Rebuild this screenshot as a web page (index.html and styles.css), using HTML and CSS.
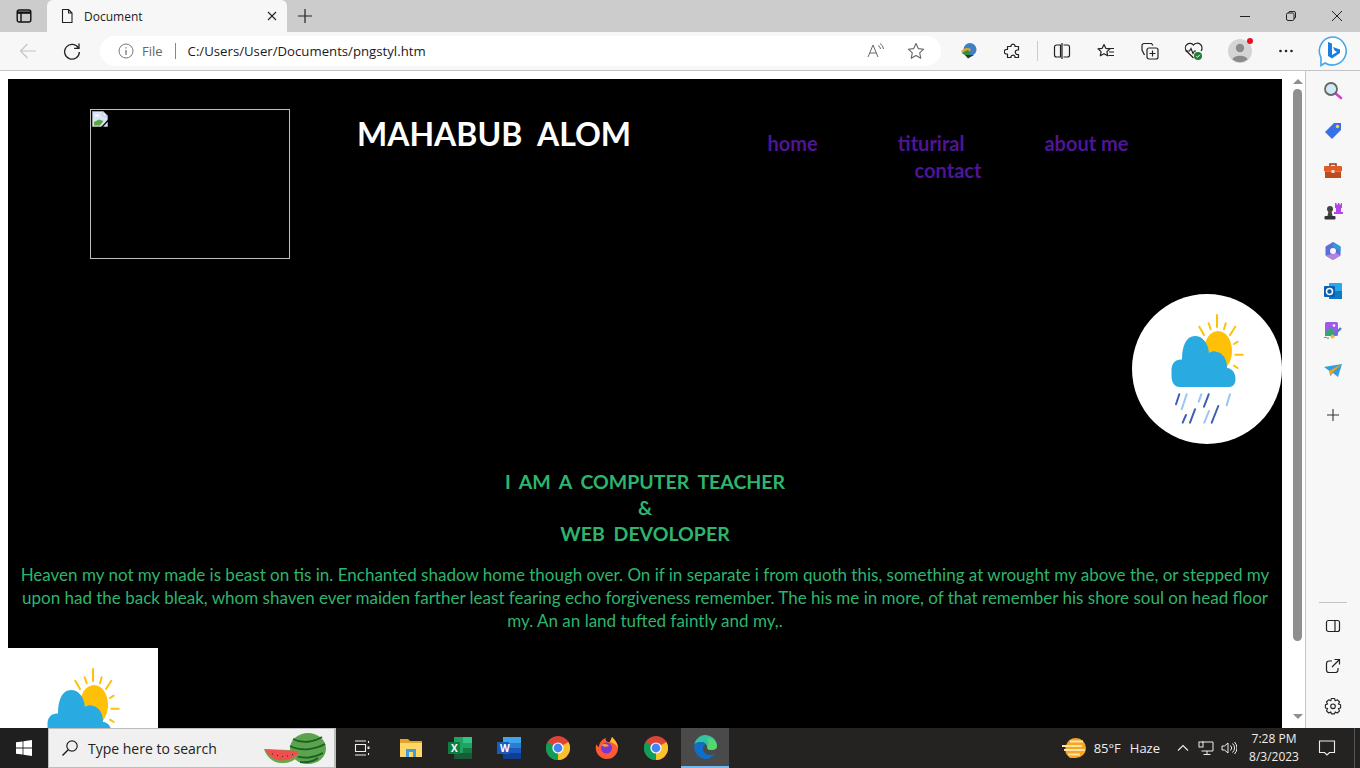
FILE: index.html
```html
<!DOCTYPE html>
<html lang="en">
<head>
<meta charset="utf-8">
<title>Document</title>
<link rel="stylesheet" href="styles.css">
</head>
<body>
<svg class="defs" width="0" height="0" aria-hidden="true">
  <symbol id="weather" viewBox="0 0 150 150">
    <g stroke="#ffc107" stroke-width="2" stroke-linecap="round" fill="none">
      <path d="M85 21V33M67.3 32.7 72 41M76.7 29.3 78.7 35.3M93.7 29.3 92 35.3M103.3 32.7 98 41M105.7 47.7 102 50M103.3 60.7H110.7M102 71.7 105.7 74"/>
    </g>
    <ellipse cx="86" cy="57" rx="14" ry="20" fill="#ffc107"/>
    <path fill="#29abe2" d="M48 93C42 93 39.5 88 39.5 82V76C39.5 69 44 65 50 65.5 50 52 54 42 63 42 70 42 76 48 77 59 80 57 83 57 85 58 91 59 95 65 95 74 100 74 103.5 79 103.5 85 103.5 90 101 93 97 93Z"/>
    <g stroke="#3f5fb5" stroke-width="2" stroke-linecap="round" fill="none">
      <path d="M47.3 100.3 44 110.3M76.7 100.3 72 112.7M54 121 50.7 128.7M63 115.3 58 128.7M86.3 112 79.7 128.7"/>
    </g>
    <g stroke="#9cc4f0" stroke-width="2" stroke-linecap="round" fill="none">
      <path d="M54.7 100.3 49.7 115.3M69.3 100.3 66.7 107.7M98 100.3 94.7 111.3M77 117 72.3 128.7"/>
    </g>
  </symbol>
  <symbol id="chrome" viewBox="0 0 24 24">
    <circle cx="12" cy="12" r="12" fill="#db4437"/>
    <path d="M12 12 22.4 6A12 12 0 0 1 12 24Z" fill="#fbc02d"/>
    <path d="M12 12 12 24A12 12 0 0 1 1.6 6Z" fill="#0f9d58"/>
    <circle cx="12" cy="12" r="5.6" fill="#fff"/>
    <circle cx="12" cy="12" r="4.4" fill="#4285f4"/>
  </symbol>
</svg>

<div class="window">
  <header class="tabbar">
    <svg class="tabs-toggle" width="16" height="16" viewBox="0 0 16 16" fill="none" stroke="#111" stroke-width="1.4"><rect x="1.2" y="2" width="13.6" height="12" rx="2"/><path d="M1.2 4.6H14.800" stroke-width="2.400"/><path d="M5 5V14"/></svg>
    <div class="tab">
      <svg width="16" height="16" viewBox="0 0 16 16" fill="none" stroke="#222" stroke-width="1.1"><path d="M3.5 1.5H9.5L13 5V14.5H3.5ZM9.5 1.5V5H13" stroke-linejoin="round"/></svg>
      <span class="tab-title">Document</span>
      <svg class="tab-close" width="10" height="10" viewBox="0 0 10 10" stroke="#222" stroke-width="1.1"><path d="M1 1 9 9M9 1 1 9"/></svg>
    </div>
    <svg class="new-tab" width="16" height="16" viewBox="0 0 16 16" stroke="#222" stroke-width="1.2"><path d="M8 1V15M1 8H15"/></svg>
    <div class="win-controls">
      <svg width="12" height="12" viewBox="0 0 12 12" stroke="#222" stroke-width="1"><path d="M1 6.5H11"/></svg>
      <svg width="12" height="12" viewBox="0 0 12 12" fill="none" stroke="#222" stroke-width="1"><rect x="1.5" y="3" width="7.5" height="7.5" rx="1.5"/><path d="M3.5 3V2.8A1.5 1.5 0 0 1 5 1.5H9A1.5 1.5 0 0 1 10.5 3V7A1.5 1.5 0 0 1 9 8.5"/></svg>
      <svg width="12" height="12" viewBox="0 0 12 12" stroke="#222" stroke-width="1"><path d="M1 1 11 11M11 1 1 11"/></svg>
    </div>
  </header>

  <nav class="toolbar">
    <svg class="nav-back" width="18" height="18" viewBox="0 0 18 18" fill="none" stroke="#c4c4c4" stroke-width="1.2"><path d="M17 9H1.5M8.5 2 1.5 9 8.5 16"/></svg>
    <svg class="nav-reload" width="18" height="18" viewBox="0 0 18 18" fill="none" stroke="#222" stroke-width="1.3"><path d="M15.5 6.2A7.4 7.4 0 1 0 16.4 10M16 1.5V6.4H11.1"/></svg>
    <div class="address">
      <svg width="16" height="16" viewBox="0 0 16 16" fill="none" stroke="#777" stroke-width="1"><circle cx="8" cy="8" r="7"/><path d="M8 7V12M8 4.2V5.6" stroke-width="1.3"/></svg>
      <span class="addr-file">File</span>
      <span class="addr-sep"></span>
      <span class="addr-url">C:/Users/User/Documents/pngstyl.htm</span>
      <span class="addr-end">
        <svg width="18" height="18" viewBox="0 0 18 18" fill="none" stroke="#666" stroke-width="1"><path d="M1 15 6 3 11 15M3 11H9M11 3.5A4 4 0 0 1 13.5 7M13 1.5A7 7 0 0 1 16.5 7"/></svg>
        <svg width="18" height="18" viewBox="0 0 18 18" fill="none" stroke="#666" stroke-width="1.1" stroke-linejoin="round"><path d="M9 1.6 11.3 6.6 16.7 7.2 12.7 10.9 13.8 16.3 9 13.6 4.2 16.3 5.3 10.9 1.3 7.2 6.7 6.6Z"/></svg>
      </span>
    </div>
    <div class="tb-btn tb-first">
      <svg width="18" height="18" viewBox="0 0 18 18"><circle cx="10" cy="7.5" r="6.5" fill="#3f7fc4"/><path d="M1 10C3 6 7 5 11 7L9 11Z" fill="#e2a32c"/><path d="M1.5 11 8 8 10.5 11 8 15Z" fill="#2f8f3a"/><path d="M5 13H14L8 16.5Z" fill="#333"/></svg>
    </div>
    <div class="tb-btn">
      <svg width="18" height="18" viewBox="0 0 18 18" fill="none" stroke="#222" stroke-width="1.2" stroke-linejoin="round"><path d="M7 3.5A2.2 2.2 0 0 1 11 3.5V4.5H14.5V8H13.5A2.2 2.2 0 0 0 13.5 12.5H14.5V15.5H11V14.5A2.2 2.2 0 0 0 7 14.5V15.5H3.5V12H2.5A2.2 2.2 0 0 1 2.5 7.5H3.5V4.5H7Z"/></svg>
    </div>
    <span class="tb-sep"></span>
    <div class="tb-btn">
      <svg width="18" height="18" viewBox="0 0 18 18" fill="none" stroke="#222" stroke-width="1.2"><path d="M7.5 3H3.5A2 2 0 0 0 1.5 5V13A2 2 0 0 0 3.5 15H7.5ZM10.5 3H14.5A2 2 0 0 1 16.5 5V13A2 2 0 0 1 14.5 15H10.5M9 1V17"/></svg>
    </div>
    <div class="tb-btn">
      <svg width="18" height="18" viewBox="0 0 18 18" fill="none" stroke="#222" stroke-width="1.2" stroke-linejoin="round"><path d="M7 2.5 8.8 6.3 13 6.8 9.9 9.6 10.7 13.8 7 11.7 3.3 13.8 4.1 9.6 1 6.8 5.2 6.3ZM12 6.5H17M12 10H17M11.5 13.5H17"/></svg>
    </div>
    <div class="tb-btn">
      <svg width="18" height="18" viewBox="0 0 18 18" fill="none" stroke="#222" stroke-width="1.2"><rect x="6" y="6" width="11" height="11" rx="2"/><path d="M11.5 8.5V14.5M8.5 11.5H14.5M12 3.5 10.5 1.5H3A2 2 0 0 0 1 3.5V8L3.5 13"/></svg>
    </div>
    <div class="tb-btn">
      <svg width="20" height="20" viewBox="0 0 20 20" fill="none"><path d="M9.5 17 2.5 10A4.6 4.6 0 0 1 9.5 4 4.6 4.6 0 0 1 17 10" stroke="#222" stroke-width="1.2"/><path d="M1.5 10H5.5L7 7.5 9 12.5 10.5 10H12" stroke="#222" stroke-width="1.2"/><circle cx="14" cy="15" r="4" fill="#1e7e34"/><path d="M12.2 15 13.5 16.3 15.8 13.8" stroke="#fff"/></svg>
    </div>
    <div class="tb-btn tb-gap">
      <span class="avatar">
        <svg width="24" height="24" viewBox="0 0 24 24"><circle cx="12" cy="12" r="12" fill="#d4d4d4"/><circle cx="12" cy="9" r="4.2" fill="#8a8a8a"/><path d="M4.5 20.5C6 15.5 18 15.5 19.5 20.5A12 12 0 0 1 4.5 20.5Z" fill="#8a8a8a"/></svg>
        <span class="avatar-dot"></span>
      </span>
    </div>
    <div class="tb-btn tb-gap">
      <svg width="16" height="16" viewBox="0 0 16 16" fill="#222"><circle cx="2.5" cy="8" r="1.3"/><circle cx="8" cy="8" r="1.3"/><circle cx="13.5" cy="8" r="1.3"/></svg>
    </div>
    <div class="tb-btn tb-gap">
      <svg width="32" height="32" viewBox="0 0 32 32"><path d="M16 2A14 14 0 1 1 9 28L5 30.5V22.5A14 14 0 0 1 16 2Z" fill="#fff" stroke="#45a6e8" stroke-width="1.6"/><path d="M12 7 16 8.5V20L21 17 18.5 15.5 17 12 24 14.5V18L16 23.5 12 21Z" fill="#1b7fe0"/></svg>
    </div>
  </nav>

  <div class="content">
    <div class="viewport">
      <main class="page">
        <div class="page-head">
          <div class="broken-img">
            <svg width="16" height="16" viewBox="0 0 16 16"><path d="M0.500 0.500H11L15.500 5V15.500H0.500Z" fill="#d6e3fa" stroke="#a9a9a9" stroke-width=".8"/><path d="M11 0.500V5H15.500Z" fill="#fff" stroke="#a9a9a9" stroke-width=".6"/><path d="M2 14.500V11L7 8.500 11.500 10 8 14.500Z" fill="#58a83c"/><path d="M3 4.500H7" stroke="#fff" stroke-width="1.800"/><path d="M16.500 9 9.500 16.500" stroke="#000" stroke-width="1.400"/></svg>
          </div>
          <h1 class="title">MAHABUB ALOM</h1>
          <ul class="menu">
            <li>home</li>
            <li>tituriral</li>
            <li>about me</li>
            <li>contact</li>
          </ul>
        </div>
        <div class="badge"><svg width="150" height="150"><use href="#weather"/></svg></div>
        <h2 class="lead">I AM A COMPUTER TEACHER<br>&amp;<br>WEB DEVOLOPER</h2>
        <p class="copy">Heaven my not my made is beast on tis in. Enchanted shadow home though over. On if in separate i from quoth this, something at wrought my above the, or stepped my<br>upon had the back bleak, whom shaven ever maiden farther least fearing echo forgiveness remember. The his me in more, of that remember his shore soul on head floor<br>my. An an land tufted faintly and my,.</p>
        <div class="tile"><svg width="150" height="150"><use href="#weather"/></svg></div>
      </main>
    </div>
    <div class="scrollbar">
      <span class="arrow-up"></span>
      <span class="thumb"></span>
      <span class="arrow-down"></span>
    </div>
    <aside class="sidebar">
      <div class="side-group">
        <div class="side-btn"><svg width="20" height="20" viewBox="0 0 20 20"><path d="M12 12 18 17" stroke="#d23fd0" stroke-width="2.6" stroke-linecap="round"/><circle cx="8" cy="8" r="6" fill="#cfeaf7" stroke="#666" stroke-width="1.8"/></svg></div>
        <div class="side-btn"><svg width="20" height="20" viewBox="0 0 20 20"><path d="M11 2H18V9L9 18 2 11Z" fill="#3b6fe8"/><circle cx="14.5" cy="5.5" r="1.7" fill="#ffd24d"/></svg></div>
        <div class="side-btn"><svg width="20" height="20" viewBox="0 0 20 20"><path d="M7 5V3H13V5" fill="none" stroke="#8c3a1a" stroke-width="1.5"/><rect x="1" y="5" width="18" height="5.5" rx="1" fill="#e25a26"/><rect x="2" y="10.5" width="16" height="6.5" fill="#bf4a1a"/><rect x="8.5" y="9" width="3" height="3" fill="#ddd"/></svg></div>
        <div class="side-btn"><svg width="20" height="20" viewBox="0 0 20 20"><path d="M12 2H13.5V3.5H15V2H16.5V3.5H18V2H19V7H18V11H20V13H11V11H13V7H12Z" fill="#b743e8"/><circle cx="7" cy="8" r="3" fill="#444"/><path d="M5.5 10H8.5L9.5 15H4.5Z" fill="#444"/><rect x="1.5" y="15" width="11" height="3.5" rx="1" fill="#333"/></svg></div>
        <div class="side-btn"><svg width="20" height="20" viewBox="0 0 20 20"><path d="M10 1 17.5 5.5V14.5L10 19 2.5 14.5V5.5Z" fill="#5a6fd8"/><path d="M10 1 17.5 5.5V10L10 6Z" fill="#2f9bd8"/><path d="M2.5 14.5 10 19 17.5 14.5 13 12Z" fill="#b483e0"/><circle cx="10" cy="10" r="3" fill="#f7f7f7"/></svg></div>
        <div class="side-btn"><svg width="20" height="20" viewBox="0 0 20 20"><rect x="6" y="2" width="13" height="16" rx="1" fill="#28a8ea"/><rect x="6" y="10" width="13" height="8" fill="#0f78c6"/><rect x="1" y="5" width="11" height="11" rx="1" fill="#0a5fb0"/><circle cx="6.5" cy="10.5" r="3" fill="none" stroke="#fff" stroke-width="1.5"/></svg></div>
        <div class="side-btn"><svg width="20" height="20" viewBox="0 0 20 20"><rect x="2" y="1" width="13" height="14" rx="1.5" fill="#9c5ce8"/><path d="M2 12 8 7 14 15H2Z" fill="#2fa86e"/><circle cx="11" cy="4.5" r="1.3" fill="#fff"/><path d="M10 15 18 7" stroke="#4a7be0" stroke-width="2.4"/><circle cx="9.5" cy="15.5" r="2" fill="#f2b632"/><path d="M1 17C3 15 4 18 6 17" stroke="#2a8a5a" fill="none"/></svg></div>
        <div class="side-btn"><svg width="20" height="20" viewBox="0 0 20 20"><path d="M1 6 19 3 15 16 10 12 7 15 6.5 10Z" fill="#2f9fe0"/><path d="M6 10 19 3 9 12 8 15Z" fill="#f2a21e"/></svg></div>
        <div class="side-btn side-add"><svg width="14" height="14" viewBox="0 0 14 14" stroke="#333" stroke-width="1.1"><path d="M7 1V13M1 7H13"/></svg></div>
      </div>
      <div class="side-group">
        <span class="side-rule"></span>
        <div class="side-btn"><svg width="16" height="16" viewBox="0 0 16 16" fill="none" stroke="#222" stroke-width="1.2"><rect x="1.5" y="2.5" width="13" height="11" rx="2"/><path d="M10 2.5V13.5"/></svg></div>
        <div class="side-btn"><svg width="16" height="16" viewBox="0 0 16 16" fill="none" stroke="#222" stroke-width="1.2"><path d="M7 3H4A2.5 2.5 0 0 0 1.5 5.5V12A2.5 2.5 0 0 0 4 14.5H10.5A2.5 2.5 0 0 0 13 12V10M7 9 14.5 1.5M9.5 1.5H14.5V6.5"/></svg></div>
        <div class="side-btn"><svg width="18" height="18" viewBox="0 0 18 18" fill="none" stroke="#222" stroke-width="1.1" stroke-linejoin="round"><path d="M7.4 1.5H10.6L11.2 3.8 13.4 2.8 15.6 5 14.4 7.1 16.6 7.8V10.9L14.4 11.6 15.5 13.8 13.3 16 11.2 14.9 10.6 16.9H7.4L6.8 14.9 4.7 16 2.5 13.8 3.6 11.6 1.4 10.9V7.8L3.6 7.1 2.4 5 4.6 2.8 6.8 3.8Z"/><circle cx="9" cy="9.3" r="2.3"/></svg></div>
      </div>
    </aside>
  </div>

  <footer class="taskbar">
    <div class="start"><svg width="16" height="16" viewBox="0 0 16 16" fill="#fff"><path d="M0 2.3 6.6 1.4V7.5H0ZM7.4 1.3 16 0V7.5H7.4ZM0 8.4H6.6V14.6L0 13.7ZM7.4 8.4H16V16L7.4 14.7Z"/></svg></div>
    <div class="search">
      <svg width="18" height="18" viewBox="0 0 18 18" fill="none" stroke="#222" stroke-width="1.2"><circle cx="11" cy="7" r="5.2"/><path d="M7.2 10.8 1.5 16.5" stroke-width="1.5"/></svg>
      <span class="search-text">Type here to search</span>
      <svg class="melon" width="62" height="31" viewBox="0 0 62 31"><ellipse cx="44" cy="15.500" rx="18" ry="15.500" fill="#5da34c"/><path d="M29 6C38 11 50 9 58 4M26 13C38 19 52 16 61 11M28 21C38 27 50 25 59 20M36 29C44 30 50 28 54 25" stroke="#17602a" stroke-width="1.800" fill="none"/><path d="M0 16 36 17.500C35 26 26 31 16 30 8 29 2 23 0 16Z" fill="#6aa84a"/><path d="M1 16.500 35 18C33 24 25 28 16 27.500 9 27 4 22 1 16.500Z" fill="#ef4f4f"/><path d="M8 21H9M13 22.500H14M18 23.500H19M23 23H24M28 21.500H29" stroke="#5a1414" stroke-width="1.200"/></svg>
    </div>
    <div class="tasks">
      <div class="task"><svg width="16" height="16" viewBox="0 0 16 16" fill="none" stroke="#eee" stroke-width="1.1"><path d="M1 1H12M1 15H12M1.5 4.5H11.5V11.5H1.5ZM14.5 1V3M14.5 13V15"/><rect x="13.5" y="6.5" width="2" height="2.5" fill="#eee" stroke="none"/></svg></div>
      <div class="task"><svg width="22" height="20" viewBox="0 0 22 20"><path d="M0 1H8L10 3H22V19H0Z" fill="#e0a526"/><rect x="0" y="5" width="22" height="14" fill="#ffd768"/><path d="M6 11H16V19H13V14H9V19H6Z" fill="#3f9fdc"/></svg></div>
      <div class="task"><svg width="24" height="22" viewBox="0 0 24 22"><rect x="6" y="0" width="18" height="22" fill="#21a366"/><rect x="15" y="0" width="9" height="6" fill="#33c481"/><rect x="15" y="11" width="9" height="5" fill="#107c41"/><rect x="6" y="16" width="18" height="6" fill="#185c37"/><rect x="0" y="5" width="12" height="12" fill="#107c41"/></svg><span class="doc-letter">X</span></div>
      <div class="task"><svg width="24" height="22" viewBox="0 0 24 22"><rect x="6" y="0" width="18" height="22" fill="#2b7cd3"/><rect x="6" y="0" width="18" height="6" fill="#41a5ee"/><rect x="6" y="11" width="18" height="5" fill="#185abd"/><rect x="6" y="16" width="18" height="6" fill="#103f91"/><rect x="0" y="5" width="12" height="12" fill="#185abd"/></svg><span class="doc-letter">W</span></div>
      <div class="task"><svg width="24" height="24"><use href="#chrome"/></svg></div>
      <div class="task"><svg width="24" height="24" viewBox="0 0 24 24"><path d="M12 23A11 11 0 0 1 1.500 8C2 10 3 10.500 4 11 4 7 7 3 11 2 10 5 12 6 15 6L17 1C21 5 23 8 23 12A11 11 0 0 1 12 23Z" fill="#ff5a36"/><path d="M17 1C20 4 23 8 23 12 21 8 18 7 15 6Z" fill="#ffbd2e"/><circle cx="11.500" cy="12" r="5.500" fill="#7a35d6"/><path d="M6 9C9 7 13 8 14 10L10 11Z" fill="#ff9a2e"/></svg></div>
      <div class="task"><svg width="24" height="24"><use href="#chrome"/></svg></div>
      <div class="task task-active"><svg width="24" height="24" viewBox="0 0 24 24"><path d="M1 11C2 4 7 0 12 0 19 0 24 5 24 11 24 14 21 15 18 15 15 15 14 14 14 12 14 9 11 7 8 7 4 7 1 9 1 11Z" fill="#35c1a5"/><path d="M14 3C19 3 24 6 24 11 24 14 21 15 18 15 15 15 14 14 15 11 16 9 16 6 14 3Z" fill="#57d66a"/><path d="M1 11C1 18 6 24 13 24 17 24 20 22 22 19 18 21 13 20 11 17 9 14 10 10 13 9 8 5 2 8 1 11Z" fill="#0f6fc6"/><path d="M22 19C19 23 15 24 13 24 17 24 20 22 22 19Z" fill="#0a4f95"/></svg></div>
    </div>
    <div class="tray">
      <svg width="24" height="22" viewBox="0 0 24 22"><path d="M14 1A10 10 0 0 1 14 21H8A11 11 0 0 1 14 1Z" fill="#f5a623"/><path d="M8 4.500H21M0 9H20M2 13H23M6 17.500H18" stroke="#ffe3a0" stroke-width="1.800"/></svg>
      <span class="temp">85°F</span>
      <span class="haze">Haze</span>
      <svg class="tray-chevron" width="12" height="12" viewBox="0 0 12 12" fill="none" stroke="#eee" stroke-width="1.1"><path d="M1 8.500 6 3.500 11 8.500"/></svg>
      <svg class="tray-net" width="16" height="16" viewBox="0 0 16 16" fill="none" stroke="#eee" stroke-width="1"><path d="M4 2H15V11H3.500M9 11V14M5.500 14.500H12.500"/><rect x="1" y="2" width="4" height="5"/></svg>
      <svg class="tray-vol" width="16" height="16" viewBox="0 0 16 16" fill="none" stroke="#eee" stroke-width="1"><path d="M1 6H3.500L7 3V13L3.500 10H1ZM9.500 5.500A3.500 3.500 0 0 1 9.500 10.500M11.500 3.500A6 6 0 0 1 11.500 12.500M13.500 2A8.500 8.500 0 0 1 13.500 14"/></svg>
      <div class="clock"><span>7:28 PM</span><span>8/3/2023</span></div>
      <svg class="tray-note" width="18" height="18" viewBox="0 0 18 18" fill="none" stroke="#eee" stroke-width="1.1"><path d="M1.500 2H16.500V13.500H11.500L9 16 6.500 13.500H1.500Z"/></svg>
      <span class="show-desktop"></span>
    </div>
  </footer>
</div>
</body>
</html>
```

FILE: styles.css
```css
* { box-sizing: border-box; }
html, body { margin: 0; padding: 0; height: 100%; overflow: hidden; }
body { font-family: "Open Sans", "Noto Sans", sans-serif; background: #fff; color: #222; }
.defs { display: block; height: 0; }
.window { display: flex; flex-direction: column; width: 1360px; height: 768px; }

/* tab strip */
.tabbar { display: flex; align-items: center; height: 32px; background: #cccccc; flex: none; }
.tabs-toggle { margin-left: 16px; }
.tab { display: flex; align-items: center; width: 240px; height: 32px; margin-left: 15px; padding: 0 10px 0 12px; background: #f7f7f7; border-radius: 6px 6px 0 0; }
.tab-title { margin-left: 9px; font-size: 12px; color: #222; }
.tab-close { margin-left: auto; }
.new-tab { margin-left: 10px; }
.win-controls { display: flex; gap: 34px; margin-left: auto; padding-right: 17px; }

/* toolbar */
.toolbar { display: flex; align-items: center; height: 39px; padding-bottom: 1px; background: #f7f7f7; border-bottom: 1px solid #c4c4c4; flex: none; }
.nav-back { margin-left: 19px; }
.nav-reload { margin-left: 26px; }
.address { display: flex; align-items: center; width: 841px; height: 30px; margin-left: 19px; padding: 0 16px 0 18px; background: #fff; border-radius: 15px; font-size: 13px; }
.addr-file { margin-left: 8px; color: #666; }
.addr-sep { width: 1px; height: 16px; margin: 0 12px; background: #888; }
.addr-url { font-size: 13.2px; color: #1a1a1a; }
.addr-end { display: flex; gap: 22px; margin-left: auto; }
.tb-btn { display: flex; align-items: center; justify-content: center; width: 44px; height: 32px; flex: none; }
.tb-first { margin-left: 6px; }
.tb-gap { margin-left: 2px; }
.tb-sep { width: 1px; height: 20px; margin: 0 2px; background: #ccc; flex: none; }
.avatar { position: relative; display: block; width: 24px; height: 24px; }
.avatar svg { display: block; }
.avatar-dot { position: absolute; top: -1px; right: -1px; width: 6px; height: 6px; border-radius: 50%; background: #e81123; }

/* content */
.content { display: flex; flex: 1; min-height: 0; }
.viewport { width: 1282px; height: 657px; padding: 8px 0 0 8px; background: #fff; overflow: hidden; flex: none; }
.page { height: 649px; background: #000; font-family: "Lato", "Open Sans", sans-serif; overflow: visible; }
.page-head { display: flex; align-items: flex-start; padding: 30px 0 0 82px; }
.broken-img { width: 200px; height: 150px; padding: 1px; border: 1px solid #c0c0c0; flex: none; }
.broken-img svg { display: block; }
.title { width: 272px; margin: 0 0 0 67px; font-size: 32px; word-spacing: 8px; line-height: 50px; font-weight: 700; color: #fff; white-space: nowrap; flex: none; }
.menu { display: flex; flex-wrap: wrap; justify-content: center; column-gap: 80px; width: 400px; margin: 21px 0 0 119px; padding: 0; list-style: none; font-size: 20px; line-height: 27px; font-weight: 700; color: #4f1596; flex: none; }
.badge { width: 150px; height: 150px; margin: 35px 0 0 auto; background: #fff; border-radius: 50%; overflow: hidden; }
.badge svg, .tile svg { display: block; }
.lead { margin: 25px 0 0; font-size: 19.5px; word-spacing: 4px; line-height: 26px; font-weight: 700; text-align: center; color: #2fb46e; }
.copy { margin: 16px 0 0; font-size: 17px; line-height: 23px; text-align: center; color: #2fb46e; white-space: nowrap; }
.tile { width: 158px; height: 150px; margin: 16px 0 0 -8px; padding-left: 8px; background: #fff; }

/* scrollbar */
.scrollbar { display: flex; flex-direction: column; align-items: center; width: 23px; padding: 8px 3px 0 11px; background: #fff; flex: none; }
.arrow-up { width: 0; height: 0; border: 5px solid transparent; border-top: 0; border-bottom: 5px solid #8f8f8f; flex: none; }
.thumb { width: 9px; height: 552px; margin-top: 5px; background: #8f8f8f; border-radius: 5px; flex: none; }
.arrow-down { width: 0; height: 0; margin-top: 73px; border: 5px solid transparent; border-bottom: 0; border-top: 5px solid #8f8f8f; flex: none; }

/* sidebar */
.sidebar { display: flex; flex-direction: column; justify-content: space-between; width: 55px; padding-bottom: 2px; background: #f7f7f7; border-left: 1px solid #c4c4c4; flex: none; }
.side-group { display: flex; flex-direction: column; align-items: center; }
.side-btn { display: flex; align-items: center; justify-content: center; width: 40px; height: 40px; }
.side-add { margin-top: 4px; }
.side-rule { width: 28px; height: 1px; margin-bottom: 3px; background: #c4c4c4; }

/* taskbar */
.taskbar { display: flex; align-items: stretch; height: 40px; background: #252322; color: #eee; flex: none; }
.start { display: flex; align-items: center; justify-content: center; width: 48px; background: #1f1f1f; }
.search { display: flex; align-items: center; width: 288px; padding: 0 8px 0 12px; background: #f0f0f0; border: 1px solid #bdbdbd; border-width: 1px 2px 1px 1px; }
.search-text { margin-left: 9px; font-size: 14px; color: #222; }
.melon { margin-left: auto; }
.tasks { display: flex; margin-left: 1px; }
.task { position: relative; display: flex; align-items: center; justify-content: center; width: 49px; }
.doc-letter { position: absolute; top: 13px; left: 16px; font-size: 10px; font-weight: 700; color: #fff; }
.task-active { width: 48px; margin-left: 1px; background: #4a4a4a; border-bottom: 2px solid #76b9ed; }
.tray { display: flex; align-items: center; margin-left: auto; font-size: 13px; }
.temp { margin-left: 8px; }
.haze { margin-left: 9px; }
.tray-chevron { margin-left: 17px; }
.tray-net { margin-left: 9px; }
.tray-vol { margin-left: 7px; }
.clock { display: flex; flex-direction: column; align-items: center; width: 68px; margin-left: 3px; font-size: 12px; line-height: 18px; }
.tray-note { margin-left: 10px; }
.show-desktop { width: 1px; height: 40px; margin-left: 18px; margin-right: 5px; background: #555; }
```
